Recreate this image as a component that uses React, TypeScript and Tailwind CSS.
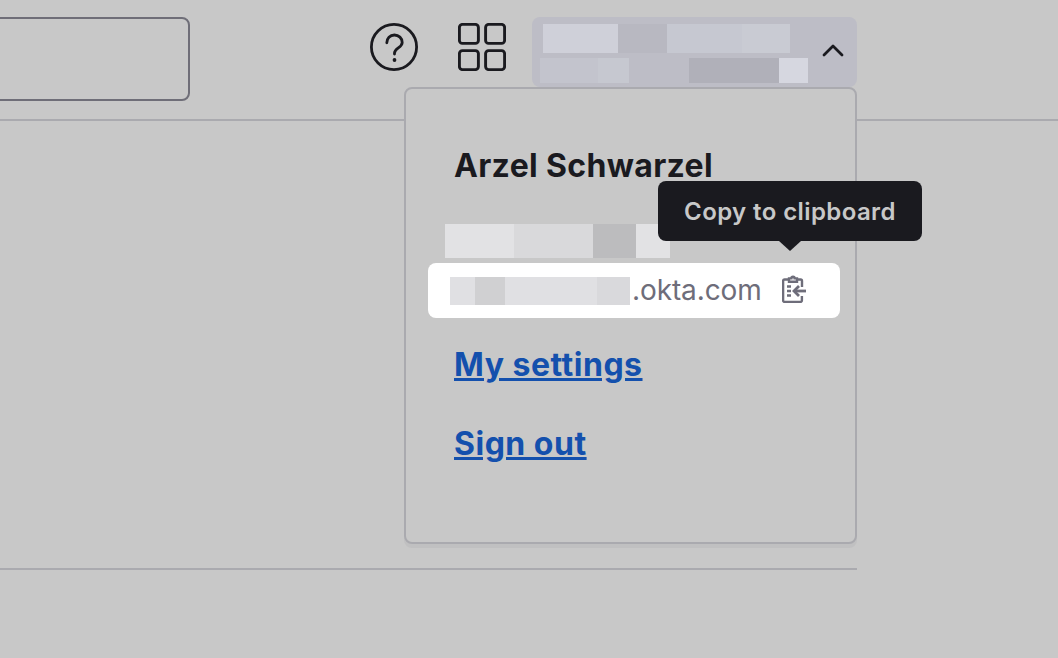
const font = "font-['Inter','Liberation_Sans',sans-serif]";

function HelpIcon() {
  return (
    <svg width="48" height="48" viewBox="0 0 48 48" fill="none" stroke="#1a1a1f" strokeWidth="2.8" strokeLinecap="round">
      <circle cx="24" cy="24" r="22.6" />
      <path d="M16.8 19.8c0-4.6 3.2-7.8 7.6-7.8s7.8 3.2 7.8 7.4c0 5.2-7.7 5.6-7.7 10.6v1" />
      <circle cx="24.5" cy="37" r="1.9" fill="#1a1a1f" stroke="none" />
    </svg>
  );
}

function GridIcon() {
  return (
    <svg width="48" height="48" viewBox="0 0 48 48" fill="none" stroke="#1a1a1f" strokeWidth="2.9">
      <rect x="1.4" y="1.4" width="19" height="19" rx="3" />
      <rect x="27.6" y="1.4" width="19" height="19" rx="3" />
      <rect x="1.4" y="27.6" width="19" height="19" rx="3" />
      <rect x="27.6" y="27.6" width="19" height="19" rx="3" />
    </svg>
  );
}

function ChevronUp() {
  return (
    <svg width="22" height="14" viewBox="0 0 22 14" fill="none" stroke="#1a1a1f" strokeWidth="2.8" strokeLinecap="round" strokeLinejoin="round">
      <path d="M2 12 L11 3 L20 12" />
    </svg>
  );
}

function ClipboardIcon() {
  return (
    <svg width="24" height="28" viewBox="0 0 24 28" fill="none" stroke="#6e6d7a" strokeWidth="2.4">
      <path d="M6.5 4.5H2.5a1.4 1.4 0 0 0-1.4 1.4v19.6a1.4 1.4 0 0 0 1.4 1.4h16a1.4 1.4 0 0 0 1.4-1.4V21M20 12V5.9a1.4 1.4 0 0 0-1.4-1.4h-4" />
      <path d="M7 6.8V3.4h2.4a1.6 1.6 0 0 1 3.2 0H15v3.4z" />
      <path d="M5 11.5h4M5 16h4M5 20.5h4" />
      <path d="M12 16h12" strokeWidth="2.8" />
      <path d="M17 11 12 16l5 5" strokeWidth="2.8" />
    </svg>
  );
}

export default function App() {
  return (
    <div className={`relative h-[658px] w-[1058px] overflow-hidden bg-[#c8c8c8] ${font}`}>
      <header className="flex h-[121px] items-start border-b-2 border-[#aaaaaf]">
        <div className="mt-[17px] -ml-[10px] h-[84px] w-[200px] rounded-lg border-2 border-[#6f6e78]" />
        <button className="mt-[23px] ml-[180px]">
          <HelpIcon />
        </button>
        <button className="mt-[23px] ml-[40px]">
          <GridIcon />
        </button>
        <div className="mt-[17px] ml-[26px] flex h-[70px] w-[325px] rounded-lg bg-[#bdbdc6]">
          <div className="flex flex-col pt-[7px]">
            <div className="ml-[11px] flex h-[29px]">
              <div className="w-[75px] bg-[#cfd0d9]" />
              <div className="w-[49px] bg-[#b8b8c1]" />
              <div className="w-[75px] bg-[#c6c8d1]" />
              <div className="w-[48px] bg-[#c9cbd3]" />
            </div>
            <div className="mt-[5px] ml-[8px] flex h-[25px]">
              <div className="w-[58px] bg-[#c3c4cd]" />
              <div className="w-[31px] bg-[#c6c8d0]" />
              <div className="w-[60px]" />
              <div className="w-[90px] bg-[#b0b0b9]" />
              <div className="w-[29px] bg-[#d6d7e0]" />
            </div>
          </div>
          <div className="mt-[26px] ml-[14px]">
            <ChevronUp />
          </div>
        </div>
      </header>
      <div className="h-[449px] w-[857px] border-b-2 border-[#aaaaaf]" />

      <div className="absolute top-[87px] left-[404px] h-[457px] w-[453px] rounded-lg border-2 border-[#aaaaaf] bg-[#c8c8c8] pt-[58px] shadow-[0_4px_0_#c0c0c1]">
        <h2 className="ml-[48px] text-[32px] leading-[38px] font-bold tracking-[0.35px] text-[#1a1a1f]">Arzel Schwarzel</h2>

        <div className="mt-[39px] ml-[39px] flex h-[34px]">
          <div className="w-[69px] bg-[#e2e2e4]" />
          <div className="w-[79px] bg-[#d9d9db]" />
          <div className="w-[43px] bg-[#bcbcbe]" />
          <div className="w-[34px] bg-[#e2e2e4]" />
        </div>

        <div className="mt-[5px] ml-[22px] flex h-[55px] w-[412px] items-center rounded-lg bg-white pl-[22px]">
          <div className="flex h-[28px]">
            <div className="w-[25px] bg-[#e0e0e3]" />
            <div className="w-[30px] bg-[#d0d0d2]" />
            <div className="w-[92px] bg-[#e0e0e3]" />
            <div className="w-[33px] bg-[#d9d9dc]" />
          </div>
          <span className="mb-[2px] ml-[2px] text-[28px] leading-[32px] tracking-[-0.1px] text-[#6e6d7a]">.okta.com</span>
          <span className="mb-[3px] ml-[20px]">
            <ClipboardIcon />
          </span>
        </div>

        <a href="#" className="mt-[27px] ml-[48px] block text-[32px] leading-[40px] font-bold tracking-[0.5px] text-[#1450ad] underline">
          My settings
        </a>
        <a href="#" className="mt-[39px] ml-[48px] block text-[32px] leading-[40px] font-bold tracking-[0.5px] text-[#1450ad] underline">
          Sign out
        </a>
      </div>

      <div className="absolute top-[181px] left-[658px] flex h-[60px] w-[264px] items-center justify-center rounded-lg bg-[#1a1a1f] pt-[1px] text-[24px] font-semibold tracking-[0.4px] text-[#c8c8c8]">
        Copy to clipboard
        <div className="absolute top-[60px] left-[121px] h-0 w-0 border-x-[11px] border-t-[10px] border-x-transparent border-t-[#1a1a1f]" />
      </div>
    </div>
  );
}
